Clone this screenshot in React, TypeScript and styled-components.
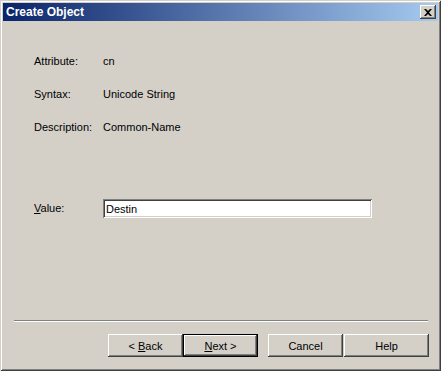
import styled, { createGlobalStyle } from "styled-components";

const GlobalStyle = createGlobalStyle`
  html, body {
    margin: 0;
    padding: 0;
    background: #d4d0c8;
  }
  body {
    font-family: Tahoma, "Liberation Sans", Arial, sans-serif;
    font-size: 11px;
    color: #000;
  }
`;

const Window = styled.div`
  box-sizing: border-box;
  width: 441px;
  height: 371px;
  padding: 3px;
  background: #d4d0c8;
  display: flex;
  flex-direction: column;
  box-shadow: inset 1px 1px 0 #d4d0c8, inset -1px -1px 0 #404040, inset 2px 2px 0 #fff,
    inset -2px -2px 0 #808080;
`;

const TitleBar = styled.div`
  height: 18px;
  display: flex;
  align-items: center;
  justify-content: space-between;
  padding: 0 2px 0 2px;
  background: linear-gradient(to right, #0a246a, #a6caf0);
`;

const Title = styled.span`
  color: #fff;
  font-weight: bold;
  font-size: 12px;
  line-height: 14px;
  padding-left: 1px;
`;

const CloseButton = styled.button`
  box-sizing: border-box;
  width: 16px;
  height: 14px;
  padding: 0;
  margin: 0;
  border: none;
  background: #d4d0c8;
  display: flex;
  align-items: center;
  justify-content: center;
  box-shadow: inset -1px -1px 0 #404040, inset 1px 1px 0 #fff, inset -2px -2px 0 #808080;
`;

const Body = styled.div`
  flex: 1;
  display: flex;
  flex-direction: column;
  padding: 34px 10px 11px 11px;
`;

const Fields = styled.div`
  display: grid;
  grid-template-columns: 69px 1fr;
  row-gap: 20px;
  padding-left: 20px;
`;

const Label = styled.span`
  line-height: 13px;
  white-space: nowrap;
`;

const Value = styled.span`
  line-height: 13px;
`;

const ValueRow = styled.div`
  display: grid;
  grid-template-columns: 69px 269px;
  align-items: center;
  padding-left: 20px;
  margin-top: 65px;
`;

const TextInput = styled.input`
  box-sizing: border-box;
  width: 269px;
  height: 19px;
  margin: 0;
  padding: 1px 3px 0;
  border: none;
  background: #fff;
  font-family: inherit;
  font-size: 11px;
  color: #000;
  outline: none;
  box-shadow: inset 1px 1px 0 #808080, inset -1px -1px 0 #fff, inset 2px 2px 0 #404040,
    inset -2px -2px 0 #d4d0c8;
`;

const Footer = styled.div`
  margin-top: auto;
  display: flex;
  flex-direction: column;
  gap: 12px;
`;

const Separator = styled.div`
  height: 0;
  border-top: 1px solid #808080;
  border-bottom: 1px solid #fff;
`;

const ButtonRow = styled.div`
  display: flex;
  justify-content: flex-end;
  margin-right: -1px;
`;

const Button = styled.button<{ $primary?: boolean; $w?: number; $gap?: number }>`
  box-sizing: border-box;
  width: ${(p) => p.$w ?? 75}px;
  height: 23px;
  margin: 0 0 0 ${(p) => p.$gap ?? 0}px;
  padding: 0;
  border: ${(p) => (p.$primary ? "1px solid #000" : "none")};
  background: #d4d0c8;
  font-family: inherit;
  font-size: 11px;
  color: #000;
  box-shadow: inset -1px -1px 0 #404040, inset 1px 1px 0 #fff, inset -2px -2px 0 #808080;
`;

const Key = styled.span`
  text-decoration: underline;
`;

function CloseIcon() {
  return (
    <svg width="8" height="7" viewBox="0 0 8 7">
      <path d="M0 0h2l2 2 2-2h2L5 3.5 8 7H6L4 5 2 7H0l3-3.5z" fill="#000" />
    </svg>
  );
}

export default function App() {
  return (
    <>
      <GlobalStyle />
      <Window>
        <TitleBar>
          <Title>Create Object</Title>
          <CloseButton aria-label="Close">
            <CloseIcon />
          </CloseButton>
        </TitleBar>
        <Body>
          <Fields>
            <Label>Attribute:</Label>
            <Value>cn</Value>
            <Label>Syntax:</Label>
            <Value>Unicode String</Value>
            <Label>Description:</Label>
            <Value>Common-Name</Value>
          </Fields>
          <ValueRow>
            <Label>
              <Key>V</Key>alue:
            </Label>
            <TextInput defaultValue="Destin" />
          </ValueRow>
          <Footer>
            <Separator />
            <ButtonRow>
              <Button>
                &lt; <Key>B</Key>ack
              </Button>
              <Button $primary>
                <Key>N</Key>ext &gt;
              </Button>
              <Button $gap={10}>Cancel</Button>
              <Button $gap={1} $w={85}>
                Help
              </Button>
            </ButtonRow>
          </Footer>
        </Body>
      </Window>
    </>
  );
}
